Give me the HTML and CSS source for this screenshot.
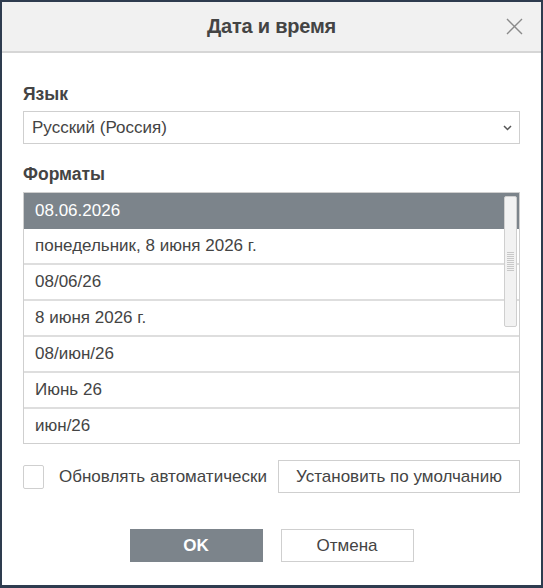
FILE: index.html
```html
<!DOCTYPE html>
<html lang="ru">
<head>
<meta charset="utf-8">
<title>Дата и время</title>
<link rel="stylesheet" href="styles.css">
</head>
<body>
<div class="dialog">
  <div class="header">
    <div class="title">Дата и время</div>
    <div class="close" aria-label="Закрыть">
      <svg width="17" height="17" viewBox="0 0 17 17"><path d="M1 1 L16 16 M16 1 L1 16" stroke="#8a8a8a" stroke-width="1.4" fill="none"/></svg>
    </div>
  </div>
  <div class="body">
    <div class="label lang-label">Язык</div>
    <div class="select">
      <span>Русский (Россия)</span>
      <svg class="chev" width="9" height="6" viewBox="0 0 9 6"><path d="M1 1 L4.5 4.5 L8 1" stroke="#555" stroke-width="1.5" fill="none"/></svg>
    </div>
    <div class="label fmt-label">Форматы</div>
    <div class="list">
      <div class="row selected">08.06.2026</div>
      <div class="row">понедельник, 8 июня 2026 г.</div>
      <div class="row">08/06/26</div>
      <div class="row">8 июня 2026 г.</div>
      <div class="row">08/июн/26</div>
      <div class="row">Июнь 26</div>
      <div class="row last">июн/26</div>
      <div class="scrollbar"><div class="grip"></div></div>
    </div>
    <div class="options">
      <div class="check"></div>
      <span class="check-label">Обновлять автоматически</span>
      <div class="btn default-btn">Установить по умолчанию</div>
    </div>
    <div class="footer">
      <div class="btn ok">OK</div>
      <div class="btn cancel">Отмена</div>
    </div>
  </div>
</div>
</body>
</html>
```
FILE: styles.css
```css
* { box-sizing: border-box; }
html, body { margin: 0; padding: 0; }
body {
  background: #2e3c4f;
  width: 543px;
  height: 588px;
  padding: 2px 2px 3px 2px;
  font-family: "Liberation Sans", Arial, sans-serif;
  color: #444;
}
.dialog {
  background: #fff;
  width: 539px;
  height: 583px;
  display: flex;
  flex-direction: column;
}
.header {
  height: 51px;
  background: #f1f1f1;
  border-bottom: 2px solid #d6d6d6;
  display: flex;
  align-items: center;
  justify-content: center;
  position: relative;
}
.title {
  font-size: 20px;
  font-weight: bold;
  color: #444;
  letter-spacing: -0.2px;
}
.close {
  position: absolute;
  right: 18px;
  top: 16px;
  width: 17px;
  height: 17px;
}
.close svg { display: block; }
.body {
  padding: 0 21px;
  display: flex;
  flex-direction: column;
}
.label {
  font-size: 17.5px;
  font-weight: bold;
  color: #444;
  line-height: 20px;
}
.lang-label { margin-top: 31px; }
.fmt-label { margin-top: 20px; }
.select {
  margin-top: 7px;
  height: 33px;
  border: 1px solid #cfcfcf;
  display: flex;
  align-items: center;
  justify-content: space-between;
  padding: 0 7px 0 8px;
  font-size: 17px;
  color: #444;
}
.list {
  margin-top: 8px;
  border: 1px solid #cfcfcf;
  position: relative;
  display: flex;
  flex-direction: column;
}
.row {
  height: 36px;
  border-bottom: 2px solid #dedede;
  display: flex;
  align-items: center;
  padding-left: 11px;
  font-size: 17px;
  color: #444;
}
.row.last { border-bottom: none; height: 34px; }
.row.selected {
  background: #7c848b;
  color: #fff;
  border-bottom: none;
}
.scrollbar {
  position: absolute;
  right: 2px;
  top: 3px;
  width: 13px;
  height: 131px;
  background: #f2f2f2;
  border: 1px solid #cfcfcf;
  border-radius: 2px;
  display: flex;
  align-items: center;
  justify-content: center;
}
.grip {
  width: 7px;
  height: 20px;
  background: repeating-linear-gradient(to bottom, #c8c8c8 0 1px, transparent 1px 2px);
}
.options {
  margin-top: 16px;
  display: flex;
  align-items: center;
}
.check {
  width: 21px;
  height: 24px;
  border: 1px solid #cfcfcf;
  border-radius: 2px;
}
.check-label {
  margin-left: 15px;
  font-size: 17px;
  color: #444;
}
.btn {
  height: 33px;
  border: 1px solid #cfcfcf;
  display: flex;
  align-items: center;
  justify-content: center;
  font-size: 17px;
  color: #444;
  background: #fff;
}
.default-btn {
  margin-left: auto;
  width: 242px;
}
.footer {
  margin-top: 36px;
  display: flex;
  justify-content: center;
  gap: 18px;
}
.ok {
  width: 133px;
  background: #7c848b;
  border-color: #7c848b;
  color: #fff;
  font-weight: bold;
}
.cancel { width: 133px; }
```
